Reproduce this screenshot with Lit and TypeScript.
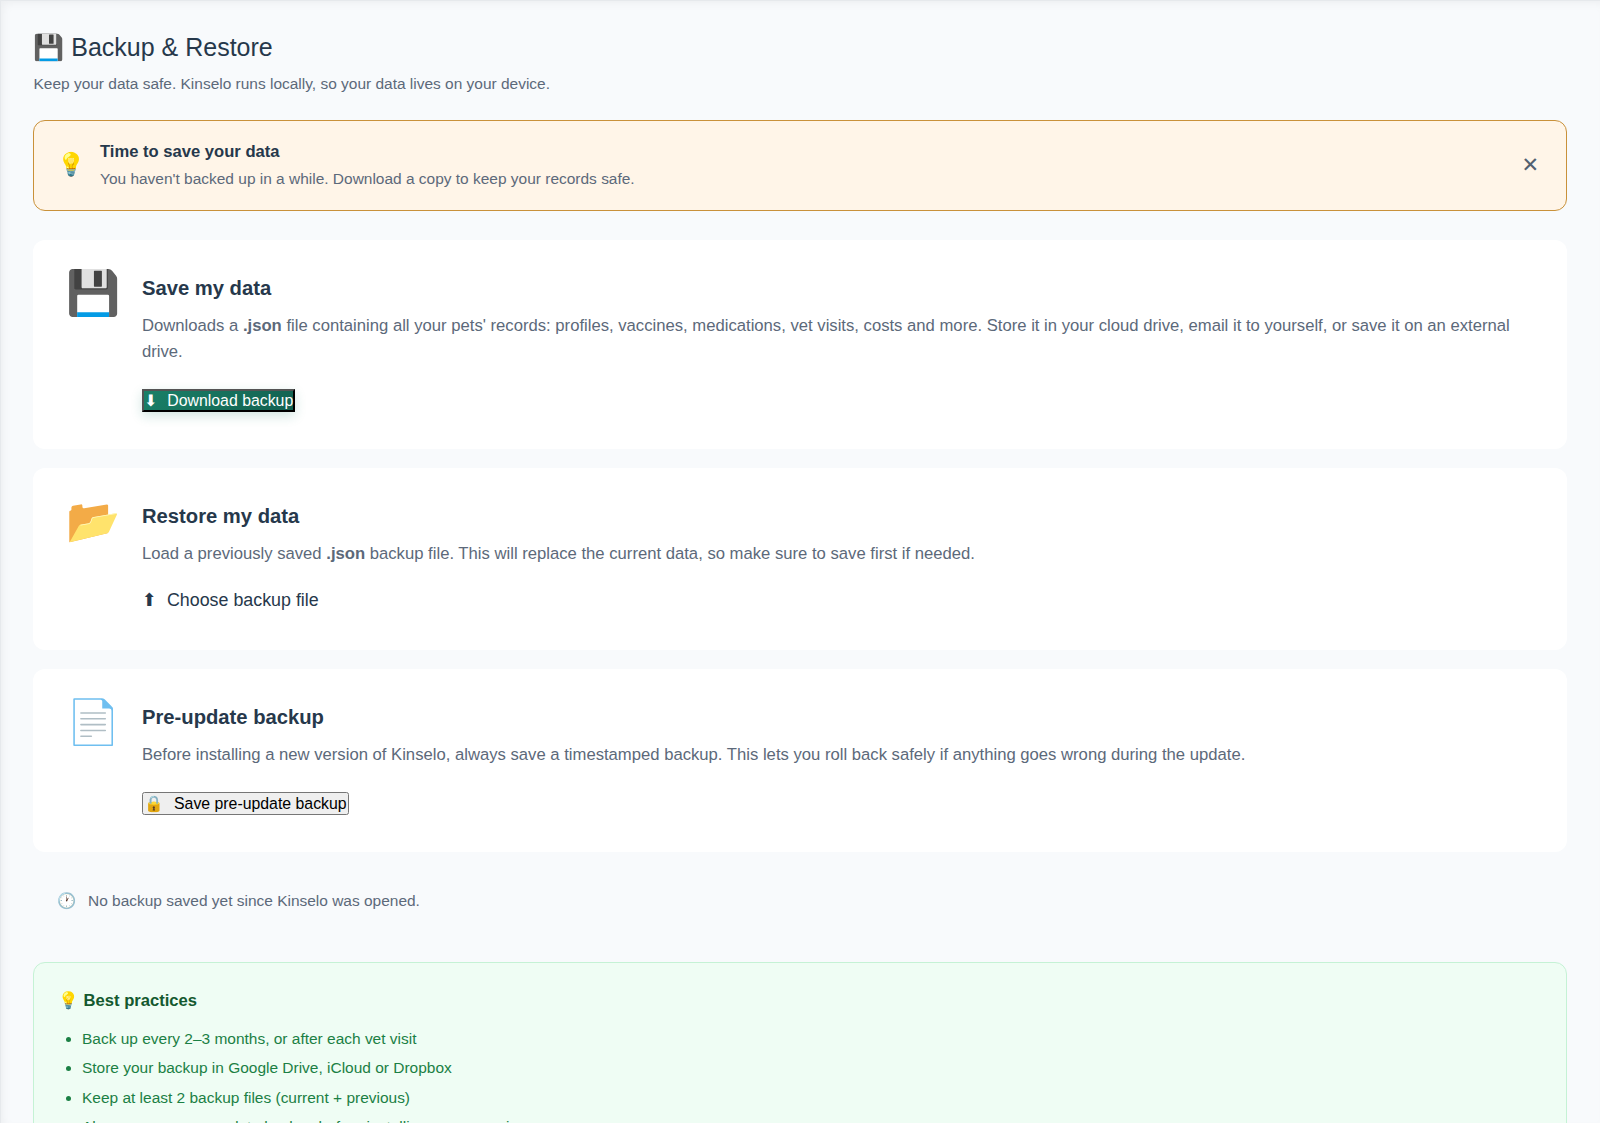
import { LitElement, html, css } from "lit";
import { customElement } from "lit/decorators.js";

const practices = [
  "Back up every 2–3 months, or after each vet visit",
  "Store your backup in Google Drive, iCloud or Dropbox",
  "Keep at least 2 backup files (current + previous)",
  "Always save a pre-update backup before installing a new version",
];

@customElement("app-root")
export class AppRoot extends LitElement {
  static styles = css`
    :host {
      display: block;
      box-sizing: border-box;
      height: 1123px;
      overflow: hidden;
      padding: 32px;
      border: 1px solid #e6e9ec;
      border-right: 0;
      border-bottom: 0;
      padding-right: 33px;
      background: #f8fafc;
      box-shadow: inset 4px 4px 10px -2px rgba(0, 0, 0, 0.05);
      color: #26384b;
      font-family: "Liberation Sans", Arial, sans-serif;
      font-size: 17px;
      line-height: 1.55;
    }
    h1, h2, h3, p, ul { margin: 0; }
    h1 { font-size: 25px; font-weight: 400; line-height: 28px; padding-left: 0.3px; }
    .sub { margin-top: 10px; font-size: 15.48px; line-height: 26px; color: #5c697a; padding-left: 0.5px; }
    .banner {
      display: flex;
      align-items: center;
      gap: 16px;
      box-sizing: border-box;
      height: 91px;
      margin-top: 23px;
      padding: 0 23px 2px;
      border: 1px solid #c9913a;
      border-radius: 12px;
      background: #fff5e8;
    }
    .bulb { font-size: 22.6px; line-height: 40px; width: 27px; }
    .banner-text { flex: 1; }
    .banner-title { font-size: 16.6px; font-weight: 700; line-height: 28px; }
    .banner-note { font-size: 15.48px; line-height: 26px; color: #5c697a; }
    .close {
      padding: 4px;
      border: 0;
      background: none;
      color: #526070;
      font: 21px "Liberation Sans", "DejaVu Sans", sans-serif;
    }
    .card {
      display: flex;
      gap: 22px;
      box-sizing: border-box;
      min-height: 182px;
      padding: 32px 33px 28px;
      border-radius: 12px;
      background: #fff;
    }
    .card:first-child { min-height: 209px; }
    .card:last-child { min-height: 183px; }
    .cards { display: flex; flex-direction: column; gap: 19px; margin-top: 29px; }
    .icon { font-size: 43.6px; line-height: 43px; width: 54px; }
    .body { flex: 1; }
    h2 { font-size: 20.22px; font-weight: 700; line-height: 32px; }
    .desc { margin-top: 9px; font-size: 16.67px; line-height: 26px; color: #5c697a; }
    .action {
      display: inline-flex;
      align-items: center;
      gap: 10px;
      margin-top: 24px;
      padding: 0;
      font: 15.85px/19px "Liberation Sans", "DejaVu Sans", sans-serif;
    }
    .primary {
      color: #fff;
      background: linear-gradient(135deg, #1a8068, #136150);
      border: 2px outset #000;
      box-shadow: 0 4px 12px rgba(26, 128, 104, 0.2);
    }
    .plain { font-size: 17.85px; line-height: 28px; margin-top: 19.4px; }
    .status {
      display: flex;
      align-items: center;
      gap: 12px;
      margin-top: 36px;
      padding: 0 24px;
      font-size: 15.48px;
      line-height: 26px;
      color: #5c697a;
    }
    .tips {
      margin-top: 48px;
      padding: 24px;
      border: 1px solid #c5f2d5;
      border-radius: 12px;
      background: #effdf4;
      color: #1b8044;
    }
    h3 { color: #14592f; font-size: 16.6px; line-height: 28px; }
    ul { margin-top: 9px; padding-left: 24px; font-size: 15.48px; line-height: 29.3px; }
  `;

  render() {
    return html`
      <h1>💾 Backup &amp; Restore</h1>
      <p class="sub">Keep your data safe. Kinselo runs locally, so your data lives on your device.</p>
      <div class="banner">
        <span class="bulb">💡</span>
        <div class="banner-text">
          <div class="banner-title">Time to save your data</div>
          <div class="banner-note">You haven't backed up in a while. Download a copy to keep your records safe.</div>
        </div>
        <button class="close">✕</button>
      </div>
      <div class="cards">
        <section class="card">
          <div class="icon">💾</div>
          <div class="body">
            <h2>Save my data</h2>
            <p class="desc">Downloads a <b>.json</b> file containing all your pets' records: profiles, vaccines, medications, vet visits, costs and more. Store it in your cloud drive, email it to yourself, or save it on an external drive.</p>
            <button class="action primary"><span>⬇</span><span>Download backup</span></button>
          </div>
        </section>
        <section class="card">
          <div class="icon">📂</div>
          <div class="body">
            <h2>Restore my data</h2>
            <p class="desc">Load a previously saved <b>.json</b> backup file. This will replace the current data, so make sure to save first if needed.</p>
            <label class="action plain"><span>⬆</span><span>Choose backup file</span></label>
          </div>
        </section>
        <section class="card">
          <div class="icon">📄</div>
          <div class="body">
            <h2>Pre-update backup</h2>
            <p class="desc">Before installing a new version of Kinselo, always save a timestamped backup. This lets you roll back safely if anything goes wrong during the update.</p>
            <button class="action"><span>🔒</span><span>Save pre-update backup</span></button>
          </div>
        </section>
      </div>
      <div class="status"><span>🕐</span><span>No backup saved yet since Kinselo was opened.</span></div>
      <section class="tips">
        <h3>💡 Best practices</h3>
        <ul>${practices.map((t) => html`<li>${t}</li>`)}</ul>
      </section>
    `;
  }
}
